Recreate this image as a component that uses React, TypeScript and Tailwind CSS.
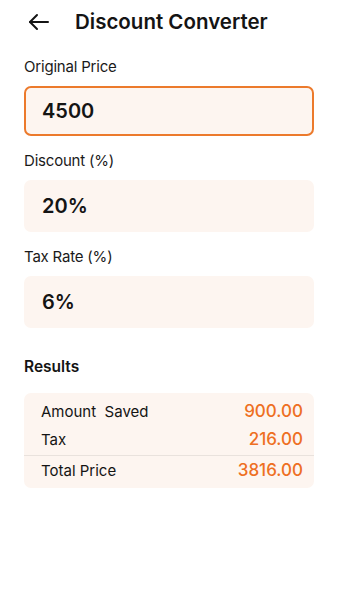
import React from "react";

function Field({ label, value, active }: { label: string; value: string; active?: boolean }) {
  return (
    <div className="flex flex-col">
      <div className="text-[15px] leading-5 text-[#1a1a1a] tracking-[-0.2px]">{label}</div>
      <div
        className={
          active
            ? "mt-[9px] h-[50px] rounded-[7px] border-2 border-[#ec7a2c] bg-[#fdf5f0] pl-4 flex items-center text-[20px] font-semibold text-[#141414]"
            : "mt-[9px] h-[52px] rounded-[7px] bg-[#fdf5f0] pl-[18px] flex items-center text-[20px] font-semibold text-[#141414]"
        }
      >
        {value}
      </div>
    </div>
  );
}

export default function App() {
  return (
    <div className="w-[338px] h-[600px] bg-white font-['Inter',sans-serif] text-[#141414]">
      <div className="h-11 flex items-center pl-[28px]">
        <svg width="21" height="18" viewBox="0 0 21 18" fill="none" stroke="#141414" strokeWidth="2" strokeLinecap="round" strokeLinejoin="round">
          <path d="M20 9H2" />
          <path d="M9 2L2 9l7 7" />
        </svg>
        <div className="ml-[26px] text-[20.5px] font-semibold">Discount Converter</div>
      </div>
      <div className="px-6 mt-[13px] flex flex-col gap-[15px]">
        <Field label="Original Price" value="4500" active />
        <Field label="Discount (%)" value="20%" />
        <Field label="Tax Rate (%)" value="6%" />
      </div>
      <div className="px-6 mt-[29px]">
        <div className="text-[15.5px] leading-5 font-semibold">Results</div>
        <div className="mt-[16px] rounded-[7px] bg-[#fdf5f0] pt-[5px] pb-[2px]">
          <div className="flex items-center justify-between h-7 pl-[17px] pr-[11px]">
            <span className="text-[15px] whitespace-pre">Amount  Saved</span>
            <span className="text-[17px] font-medium text-[#ee6f22]">900.00</span>
          </div>
          <div className="flex items-center justify-between h-7 pl-[17px] pr-[11px]">
            <span className="text-[15px]">Tax</span>
            <span className="text-[17px] font-medium text-[#ee6f22]">216.00</span>
          </div>
          <div className="h-px bg-[#e9e2dd] mt-[1px]" />
          <div className="flex items-center justify-between h-[30px] pl-[17px] pr-[11px]">
            <span className="text-[15px]">Total Price</span>
            <span className="text-[17px] font-medium text-[#ee6f22]">3816.00</span>
          </div>
        </div>
      </div>
    </div>
  );
}
